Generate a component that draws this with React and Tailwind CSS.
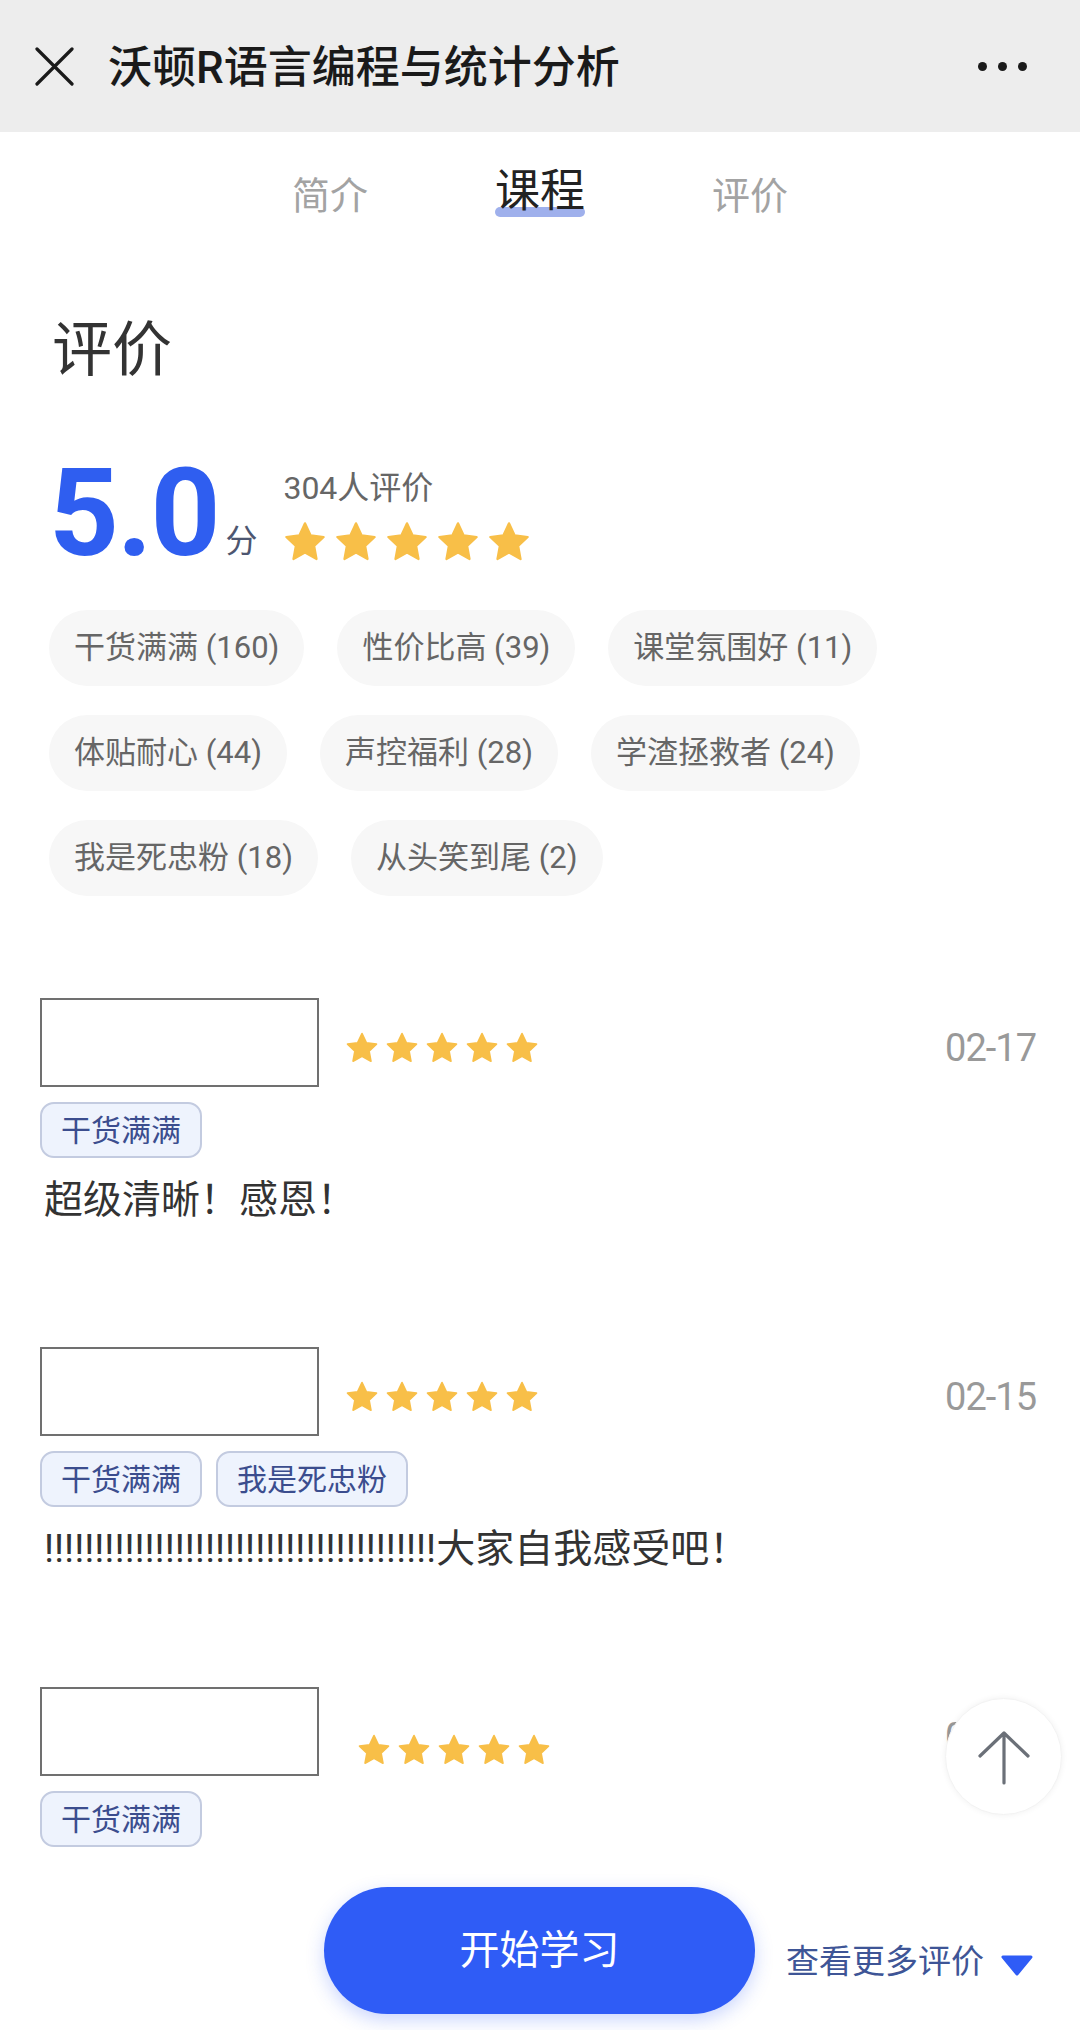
import { useState } from 'react';

const font = { fontFamily: 'Roboto, "Noto Sans CJK SC", "Noto Sans", sans-serif' };

const tagStats = [
  ['干货满满', 160],
  ['性价比高', 39],
  ['课堂氛围好', 11],
  ['体贴耐心', 44],
  ['声控福利', 28],
  ['学渣拯救者', 24],
  ['我是死忠粉', 18],
  ['从头笑到尾', 2],
];

const reviews = [
  { date: '02-17', tags: ['干货满满'], text: '超级清晰！感恩！', mt: 'mt-[102px]' },
  { date: '02-15', tags: ['干货满满', '我是死忠粉'], text: '!'.repeat(39) + '大家自我感受吧！', mt: 'mt-[123px]' },
  { date: '02-14', tags: ['干货满满'], text: '', mt: 'mt-[114px]' },
];

const Star = ({ size }) => (
  <svg width={size} height={size} viewBox="0 0 24 24">
    <path
      d="M12 1.8l3.1 6.6 7.1.9-5.2 4.9 1.3 7.1L12 17.8l-6.3 3.5 1.3-7.1-5.2-4.9 7.1-.9z"
      fill="#f8bf48"
      stroke="#f8bf48"
      strokeWidth="1.2"
      strokeLinejoin="round"
    />
  </svg>
);

const Stars = ({ size, gap }) => (
  <div className={`flex ${gap}`}>
    {[0, 1, 2, 3, 4].map((i) => (
      <Star key={i} size={size} />
    ))}
  </div>
);

const ReviewItem = ({ review, last }) => (
  <div className={review.mt}>
    <div className="flex items-center">
      {/* avatar / name placeholder box */}
      <div className="w-[279px] h-[89px] border-2 border-[#707070] bg-white shrink-0" />
      <div className={last ? 'ml-[38px] mt-[36px]' : 'ml-[26px] mt-[10px]'}>
        <Stars size={34} gap="gap-[6px]" />
      </div>
      <span className="ml-auto mr-[4px] mt-[10px] text-[38px] leading-[44px] text-[#999] tracking-[-1px]">{review.date}</span>
    </div>
    <div className="flex gap-[14px] mt-[15px]">
      {review.tags.map((t) => (
        <span
          key={t}
          className="h-[56px] px-[19px] flex items-center rounded-[14px] border-2 border-[#c3cbe0] bg-[#eef3fd] text-[30px] text-[#3b4d8e]"
        >
          {t}
        </span>
      ))}
    </div>
    {review.text && <p className="mt-[18px] ml-[4px] text-[39px] leading-[48px] text-[#333]">{review.text}</p>}
  </div>
);

const App = () => {
  const [tab, setTab] = useState('课程');

  return (
    <div className="relative w-[1080px] h-[2030px] overflow-hidden bg-white" style={font}>
      {/* Top bar */}
      <header className="h-[132px] bg-[#ededed] flex items-center pl-[35px] pr-[53px]">
        <svg width="39" height="39" viewBox="0 0 39 39" className="shrink-0">
          <path d="M2 2L37 37M37 2L2 37" stroke="#1a1a1a" strokeWidth="3.2" strokeLinecap="round" />
        </svg>
        <h1 className="ml-[34px] mt-[4px] text-[44px] font-medium text-[#1a1a1a]">沃顿R语言编程与统计分析</h1>
        <div className="ml-auto flex gap-[11px]">
          <span className="w-[9px] h-[9px] rounded-full bg-[#1a1a1a]" />
          <span className="w-[9px] h-[9px] rounded-full bg-[#1a1a1a]" />
          <span className="w-[9px] h-[9px] rounded-full bg-[#1a1a1a]" />
        </div>
      </header>

      {/* Tabs */}
      <nav className="flex justify-center h-[128px] pt-[28px]">
        {['简介', '课程', '评价'].map((t) => (
          <button key={t} onClick={() => setTab(t)} className="w-[210px] flex justify-center items-start">
            {tab === t ? (
              <span className="relative text-[45px] leading-[64px] text-[#222]">
                <span className="absolute left-0 right-0 bottom-[7px] h-[10px] rounded-full bg-[#9fb0ec]" />
                <span className="relative">{t}</span>
              </span>
            ) : (
              <span className="text-[38px] leading-[64px] text-[#a3a3a3] mt-[4px]">{t}</span>
            )}
          </button>
        ))}
      </nav>

      <main className="px-[40px]">
        <h2 className="ml-[12px] mt-[61px] text-[60px] leading-[60px] text-[#333]">评价</h2>

        {/* Score summary */}
        <div className="flex ml-[9px] mt-[81px]">
          <div className="flex items-end">
            <span className="text-[122px] leading-[104px] font-bold text-[#2f5ef0] tracking-[-2px]">5.0</span>
            <span className="ml-[7px] mb-[7px] text-[32px] leading-[36px] text-[#4d5670]">分</span>
          </div>
          <div className="ml-[26px] pt-[7px]">
            <div className="text-[32px] leading-[38px] text-[#666]">304人评价</div>
            <div className="mt-[13px]">
              <Stars size={44} gap="gap-[7px]" />
            </div>
          </div>
        </div>

        {/* Tag statistics */}
        <div className="flex flex-wrap gap-x-[33px] gap-y-[29px] ml-[9px] mt-[44px] w-[900px]">
          {tagStats.map(([name, n]) => (
            <span
              key={name}
              className="h-[76px] px-[25px] flex items-center rounded-full bg-[#f7f7f7] text-[31px] text-[#666]"
            >
              {name} ({n})
            </span>
          ))}
        </div>

        {/* Review list */}
        <div>
          {reviews.map((r, i) => (
            <ReviewItem key={r.date} review={r} last={i === reviews.length - 1} />
          ))}
        </div>
      </main>

      {/* Back to top */}
      <button className="absolute left-[945px] top-[1698px] w-[117px] h-[117px] rounded-full bg-white shadow-[0_0_6px_rgba(0,0,0,0.06)] border border-[#f3f3f3] flex items-center justify-center">
        <svg width="54" height="56" viewBox="0 0 54 56">
          <path d="M27 4V54M3 27L27 4L51 27" fill="none" stroke="#6b7078" strokeWidth="3.2" strokeLinecap="round" strokeLinejoin="round" />
        </svg>
      </button>

      {/* Bottom actions */}
      <button className="absolute left-[324px] top-[1887px] w-[431px] h-[127px] rounded-full bg-[#2f5cf6] shadow-[0_6px_18px_rgba(47,92,246,0.25)] text-white text-[40px]">
        开始学习
      </button>
      <div className="absolute left-[786px] top-[1940px] flex items-center">
        <span className="text-[33px] leading-[44px] text-[#3e5596]">查看更多评价</span>
        <svg width="34" height="22" viewBox="0 0 34 22" className="ml-[16px] mt-[6px]">
          <path d="M3 3H31L17 20Z" fill="#2f5cf6" stroke="#2f5cf6" strokeWidth="3" strokeLinejoin="round" />
        </svg>
      </div>
    </div>
  );
};

export default App;
